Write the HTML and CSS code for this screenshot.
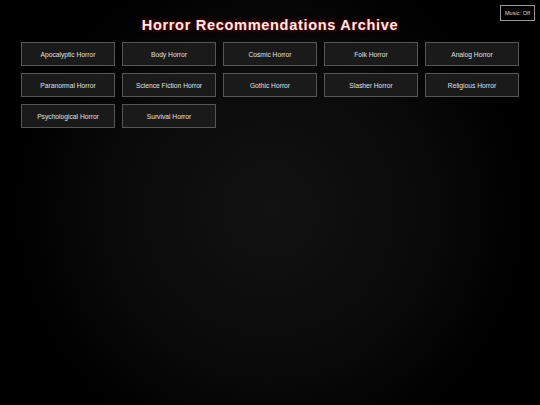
FILE: index.html
```html
<!DOCTYPE html>
<html lang="en">
<head>
<meta charset="utf-8">
<title>Horror Recommendations Archive</title>
<link rel="stylesheet" href="styles.css">
</head>
<body>
<button class="music-toggle">Music: Off</button>
<main class="page">
  <h1 class="title">Horror Recommendations Archive</h1>
  <div class="genres">
    <button class="genre">Apocalyptic Horror</button>
    <button class="genre">Body Horror</button>
    <button class="genre">Cosmic Horror</button>
    <button class="genre">Folk Horror</button>
    <button class="genre">Analog Horror</button>
    <button class="genre">Paranormal Horror</button>
    <button class="genre">Science Fiction Horror</button>
    <button class="genre">Gothic Horror</button>
    <button class="genre">Slasher Horror</button>
    <button class="genre">Religious Horror</button>
    <button class="genre">Psychological Horror</button>
    <button class="genre">Survival Horror</button>
  </div>
</main>
</body>
</html>
```
FILE: styles.css
```css
html, body {
  margin: 0;
  padding: 0;
  height: 100%;
}
body {
  background: radial-gradient(circle at 50% 52%, #121212 0%, #0a0a0a 45%, #000 75%);
  font-family: "Liberation Sans", Arial, sans-serif;
  color: #ddd;
  overflow: hidden;
}
.page {
  padding: 0 21px;
}
.title {
  margin: 0;
  padding-top: 15px;
  height: 27px;
  line-height: 20px;
  box-sizing: border-box;
  text-align: center;
  font-size: 14.6px;
  font-weight: bold;
  letter-spacing: 0.65px;
  color: #f5eaea;
  text-shadow: 0 0 3px rgba(170, 0, 0, 0.9), 0 0 6px rgba(150, 0, 0, 0.5);
}
.genres {
  margin-top: 15px;
  display: grid;
  grid-template-columns: repeat(5, 94px);
  grid-auto-rows: 24px;
  column-gap: 7px;
  row-gap: 7px;
}
.genre {
  margin: 0;
  padding: 0;
  background: #1a1a1a;
  border: 1px solid #555;
  color: #e0e0e0;
  font-family: "Liberation Sans", Arial, sans-serif;
  font-size: 6.7px;
  text-align: center;
}
.music-toggle {
  position: absolute;
  top: 5px;
  right: 5px;
  width: 35px;
  height: 16px;
  margin: 0;
  padding: 0;
  background: #000;
  border: 1px solid #999;
  color: #ddd;
  font-family: "Liberation Sans", Arial, sans-serif;
  font-size: 5.6px;
}
```
